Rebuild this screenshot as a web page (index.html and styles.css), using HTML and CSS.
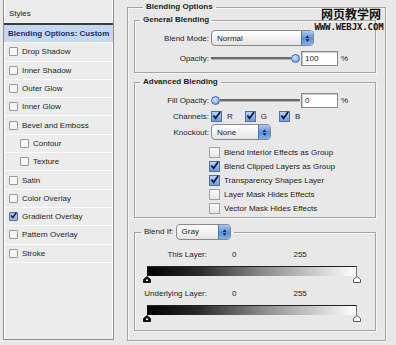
FILE: index.html
```html
<!DOCTYPE html>
<html lang="en">
<head>
    <meta charset="UTF-8">
    <title>Layer Style</title>
    <link rel="stylesheet" href="styles.css">
</head>
<body>
    <div class="styles-panel">
        <div class="styles-head">Styles</div>
        <div class="style-row active">Blending Options: Custom</div>
        <div class="style-row"><span class="box"></span>Drop Shadow</div>
        <div class="style-row"><span class="box"></span>Inner Shadow</div>
        <div class="style-row"><span class="box"></span>Outer Glow</div>
        <div class="style-row"><span class="box"></span>Inner Glow</div>
        <div class="style-row"><span class="box"></span>Bevel and Emboss</div>
        <div class="style-row sub"><span class="box"></span>Contour</div>
        <div class="style-row sub"><span class="box"></span>Texture</div>
        <div class="style-row"><span class="box"></span>Satin</div>
        <div class="style-row"><span class="box"></span>Color Overlay</div>
        <div class="style-row"><span class="box on"><svg viewBox="0 0 10 10"><path d="M1.5 5 L4 8 L9 1" /></svg></span>Gradient Overlay</div>
        <div class="style-row"><span class="box"></span>Pattern Overlay</div>
        <div class="style-row"><span class="box"></span>Stroke</div>
    </div>

    <fieldset class="options">
        <legend>Blending Options</legend>

        <fieldset class="group general">
            <legend>General Blending</legend>
            <div class="field">
                <label>Blend Mode:</label>
                <div class="select wide"><span>Normal</span><i class="arrows"><svg viewBox="0 0 8 12"><path d="M4 1 L7 5 L1 5 Z M4 11 L7 7 L1 7 Z" /></svg></i></div>
            </div>
            <div class="field">
                <label>Opacity:</label>
                <div class="slider"><span class="track"></span><span class="thumb"></span></div>
                <div class="num">100</div>
                <span class="pct">%</span>
            </div>
        </fieldset>

        <fieldset class="group advanced">
            <legend>Advanced Blending</legend>
            <div class="field">
                <label>Fill Opacity:</label>
                <div class="slider"><span class="thumb left"></span><span class="track"></span></div>
                <div class="num">0</div>
                <span class="pct">%</span>
            </div>
            <div class="field">
                <label>Channels:</label>
                <div class="channels">
                    <span class="check on"><svg viewBox="0 0 10 10"><path d="M1.5 5 L4 8 L9 1" /></svg></span><span class="ch">R</span>
                    <span class="check on"><svg viewBox="0 0 10 10"><path d="M1.5 5 L4 8 L9 1" /></svg></span><span class="ch">G</span>
                    <span class="check on"><svg viewBox="0 0 10 10"><path d="M1.5 5 L4 8 L9 1" /></svg></span><span class="ch">B</span>
                </div>
            </div>
            <div class="field">
                <label>Knockout:</label>
                <div class="select short"><span>None</span><i class="arrows"><svg viewBox="0 0 8 12"><path d="M4 1 L7 5 L1 5 Z M4 11 L7 7 L1 7 Z" /></svg></i></div>
            </div>
            <ul class="checks">
                <li><span class="check"></span>Blend Interior Effects as Group</li>
                <li><span class="check on"><svg viewBox="0 0 10 10"><path d="M1.5 5 L4 8 L9 1" /></svg></span>Blend Clipped Layers as Group</li>
                <li><span class="check on"><svg viewBox="0 0 10 10"><path d="M1.5 5 L4 8 L9 1" /></svg></span>Transparency Shapes Layer</li>
                <li><span class="check"></span>Layer Mask Hides Effects</li>
                <li><span class="check"></span>Vector Mask Hides Effects</li>
            </ul>
        </fieldset>

        <fieldset class="group blendif">
            <legend>Blend If: <div class="select gray"><span>Gray</span><i class="arrows"><svg viewBox="0 0 8 12"><path d="M4 1 L7 5 L1 5 Z M4 11 L7 7 L1 7 Z" /></svg></i></div></legend>
            <div class="layer-row">
                <label>This Layer:</label><span class="lo">0</span><span class="hi">255</span>
            </div>
            <div class="ramp"></div>
            <div class="markers">
                <svg class="mk" viewBox="0 0 8 7"><path d="M4 0.5 L7.5 3.5 L7.5 6.5 L0.5 6.5 L0.5 3.5 Z" fill="#111" stroke="#111" /><rect x="3" y="3.5" width="2" height="1.5" fill="#fff" /></svg>
                <svg class="mk" viewBox="0 0 8 7"><path d="M4 0.5 L7.5 3.5 L7.5 6.5 L0.5 6.5 L0.5 3.5 Z" fill="#fff" stroke="#555" /></svg>
            </div>
            <div class="layer-row under">
                <label>Underlying Layer:</label><span class="lo">0</span><span class="hi">255</span>
            </div>
            <div class="ramp"></div>
            <div class="markers">
                <svg class="mk" viewBox="0 0 8 7"><path d="M4 0.5 L7.5 3.5 L7.5 6.5 L0.5 6.5 L0.5 3.5 Z" fill="#111" stroke="#111" /><rect x="3" y="3.5" width="2" height="1.5" fill="#fff" /></svg>
                <svg class="mk" viewBox="0 0 8 7"><path d="M4 0.5 L7.5 3.5 L7.5 6.5 L0.5 6.5 L0.5 3.5 Z" fill="#fff" stroke="#555" /></svg>
            </div>
        </fieldset>
    </fieldset>

    <div class="watermark">
        <div class="wm-cn">网页教学网</div>
        <div class="wm-url">WWW.WEBJX.COM</div>
    </div>
</body>
</html>
```

FILE: styles.css
```css
body {
    margin: 0;
    width: 396px;
    height: 345px;
    background: #e8e8e8;
    font-family: 'Liberation Sans', Arial, sans-serif;
    font-size: 8px;
    color: #1c1c1c;
    display: flex;
    align-items: flex-start;
    position: relative;
    overflow: hidden;
}

/* left list */
.styles-panel {
    margin-left: 3px;
    width: 111px;
    height: 340px;
    box-sizing: border-box;
    background: #ececec;
    border: 1px solid #8e8e8e;
    border-top: none;
    box-shadow: inset 1px 0 0 #fff, inset -1px 0 0 #fff;
}
.styles-head {
    height: 23px;
    line-height: 28px;
    padding-left: 5px;
    border-bottom: 2px solid #3c3c3c;
    color: #222;
}
.style-row {
    height: 18.3px;
    box-sizing: border-box;
    display: flex;
    align-items: center;
    padding-left: 5px;
    border-bottom: 1px solid #fbfbfb;
}
.style-row.active {
    background: #c5d8f0;
    color: #1b2f63;
    font-weight: bold;
    padding-left: 4px;
}
.style-row.sub {
    padding-left: 16px;
}
.box {
    width: 7px;
    height: 7px;
    border: 1px solid #9a9a9a;
    border-radius: 1px;
    background: #f7f7f7;
    margin-right: 4px;
    position: relative;
}
.box.on {
    background: #9cb9e0;
    border-color: #55709c;
}
.box svg,
.check svg {
    position: absolute;
    left: 0;
    top: -1px;
    width: 100%;
    height: 100%;
    fill: none;
    stroke: #0e1a3a;
    stroke-width: 2;
}

/* right side */
fieldset {
    margin: 0;
    border: 1px solid #a4a4a4;
    box-shadow: inset 1px 1px 0 #f6f6f6, 1px 1px 0 #f6f6f6;
}
legend {
    font-weight: bold;
    padding: 0 3px;
    line-height: 12px;
    color: #222;
}
.options {
    margin-left: 13px;
    margin-top: 1px;
    width: 259px;
    height: 340px;
    box-sizing: border-box;
    padding: 1px 9px 0 6px;
}
.options > legend {
    margin-left: 9px;
}
.group {
    padding: 0;
}
.group > legend {
    margin-left: 5px;
}
.general {
    padding: 4px 0 6px;
    display: flex;
    flex-direction: column;
    gap: 4px;
}
.advanced {
    margin-top: 3px;
    padding: 4px 0 2px;
}
.field {
    height: 16px;
    display: flex;
    align-items: center;
}
.field label {
    width: 74px;
    text-align: right;
    margin-right: 2px;
    flex-shrink: 0;
}

.select {
    height: 16px;
    box-sizing: border-box;
    border: 1px solid #8a8a8a;
    border-radius: 4px;
    background: linear-gradient(#ffffff, #f0f0f0 60%, #e2e2e2);
    display: flex;
    align-items: center;
    justify-content: space-between;
    overflow: hidden;
    font-weight: normal;
}
.select span {
    padding-left: 5px;
}
.select .arrows {
    width: 11px;
    height: 100%;
    background: linear-gradient(#a9c8f0, #5c8fd6 55%, #7fb0ee);
    border-left: 1px solid #4d74ad;
    display: flex;
    align-items: center;
    justify-content: center;
}
.arrows svg {
    width: 5px;
    height: 9px;
    fill: #0f1f45;
}
.select.wide { width: 103px; }
.select.short { width: 60px; }
.select.gray { width: 55px; display: inline-flex; vertical-align: middle; }

.slider {
    width: 89px;
    height: 8px;
    display: flex;
    align-items: center;
    position: relative;
}
.track {
    flex: 1;
    height: 2px;
    background: #6a6a6a;
    border-bottom: 1px solid #b4b4b4;
}
.thumb {
    width: 7px;
    height: 7px;
    border-radius: 50%;
    background: radial-gradient(circle at 40% 35%, #d8e8ff, #5b8fd8);
    border: 1px solid #3f6aa6;
    flex-shrink: 0;
}
.num {
    width: 37px;
    height: 15px;
    box-sizing: border-box;
    border: 1px solid #8a8a8a;
    box-shadow: inset 1px 1px 0 #c8c8c8;
    background: #fff;
    margin-left: 1px;
    padding-left: 3px;
    line-height: 13px;
}
.pct {
    margin-left: 3px;
}

.channels {
    display: flex;
    align-items: center;
}
.check {
    width: 9px;
    height: 9px;
    border: 1px solid #a2a2a2;
    background: linear-gradient(#fafafa, #e6e6e6);
    position: relative;
    display: inline-block;
    flex-shrink: 0;
}
.check.on {
    background: linear-gradient(#b8d3f6, #6d9be0);
    border-color: #51719f;
}
.ch {
    margin: 0 12px 0 5px;
}

.checks {
    list-style: none;
    margin: 5px 0 0;
    padding: 0 0 0 74px;
}
.checks li {
    height: 14px;
    display: flex;
    align-items: center;
}
.checks .check {
    margin-right: 4px;
}

.blendif {
    margin-top: 6px;
    padding: 8px 0 8px;
}
.blendif > legend {
    margin-left: 6px;
    line-height: 16px;
    font-weight: normal;
}
.layer-row {
    height: 12px;
    display: flex;
    align-items: center;
}
.layer-row label {
    width: 72px;
    text-align: right;
}
.layer-row .lo {
    margin-left: 25px;
}
.layer-row .hi {
    margin-left: 57px;
}
.layer-row.under {
    margin-top: 4px;
}
.ramp {
    margin: 6px 0 0 12px;
    width: 210px;
    height: 10px;
    box-sizing: border-box;
    background: linear-gradient(to right, #000 0%, #2a2a2a 25%, #8a8a8a 55%, #fff 100%);
    border-top: 1px solid #222;
    border-right: 1px solid #777;
}
.markers {
    width: 218px;
    margin-left: 8px;
    height: 7px;
    display: flex;
    justify-content: space-between;
}
.mk {
    width: 8px;
    height: 7px;
}

.watermark {
    position: absolute;
    left: 312px;
    top: 6px;
    width: 74px;
    text-align: center;
    color: #111;
    font-weight: bold;
}
.wm-cn {
    font-family: 'Noto Sans CJK SC', sans-serif;
    font-size: 12px;
    line-height: 15px;
    margin-left: 4px;
}
.wm-url {
    font-family: 'DejaVu Sans Mono', monospace;
    font-size: 9px;
    letter-spacing: -0.1px;
    line-height: 10px;
    margin-top: 1px;
}
```
